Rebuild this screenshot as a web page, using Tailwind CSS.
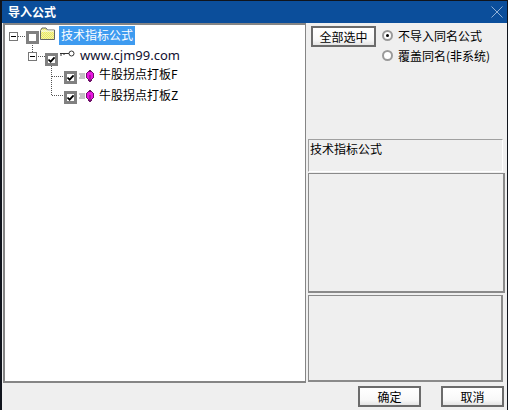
<!DOCTYPE html>
<html lang="zh">
<head>
<meta charset="UTF-8">
<title>导入公式</title>
<script src="https://cdn.jsdelivr.net/npm/@tailwindcss/browser@4"></script>
</head>
<body class="w-[508px] h-[410px] overflow-hidden bg-[#10141c] font-['Noto_Sans_CJK_SC','Noto_Sans',sans-serif] text-[12px] text-black">
<div class="ml-[2px] mt-px w-[505px] h-[409px] flex flex-col bg-[#efefef]">
  <!-- title bar -->
  <div class="h-[22px] shrink-0 bg-[#0b4e9b] flex items-center justify-between pl-[6px] pr-[3px]">
    <span class="text-white text-[12px] font-bold leading-none">导入公式</span>
    <svg width="12" height="12" viewBox="0 0 12 12" class="mr-[1px]"><path d="M0.5 0.5L11.5 11.5M11.5 0.5L0.5 11.5" stroke="#8fb0d6" stroke-width="1"/></svg>
  </div>

  <div class="flex h-[360px] pl-px">
    <!-- tree -->
    <div class="relative w-[303px] shrink-0 bg-white border-2 border-r border-[#858585] border-b-2">
      <svg class="absolute left-0 top-0" width="100" height="90" fill="none" stroke="#555" stroke-dasharray="1 1">
        <path d="M13 11.5H21M27.5 18V27M31 31.5H40M46.5 39V71M47 51.5H59M47 70.5H59"/>
      </svg>

      <div class="relative flex items-center h-[20px] mt-[1px] pl-[4px]">
        <svg width="9" height="9" viewBox="0 0 9 9"><rect x=".5" y=".5" width="8" height="8" fill="#fff" stroke="#777"/><path d="M2 4.5H7" stroke="#000"/></svg>
        <span class="ml-[8px] block shrink-0 w-[13px] h-[13px] border-[3px] border-[#808080] bg-white mt-[3px]"></span>
        <svg width="15" height="13" viewBox="0 0 15 13" class="ml-[1px] -mt-[5px]">
          <defs><pattern id="dither" width="2" height="2" patternUnits="userSpaceOnUse"><rect width="2" height="2" fill="#f6f24a"/><rect width="1" height="1" fill="#e8e8c0"/><rect x="1" y="1" width="1" height="1" fill="#e8e8c0"/></pattern></defs>
          <path d="M.5 3.5L2 1H6L7.5 3H14.5V12.5H.5Z" fill="url(#dither)" stroke="#666"/><path d="M1 4H14" stroke="#fff"/>
        </svg>
        <span class="ml-[4px] bg-[#3e9bf0] text-white h-[19px] w-[76px] text-[12px] leading-[18px] pl-[2px] -mt-[2px] whitespace-nowrap">技术指标公式</span>
      </div>

      <div class="relative flex items-center h-[20px] pl-[23px]">
        <svg width="9" height="9" viewBox="0 0 9 9"><rect x=".5" y=".5" width="8" height="8" fill="#fff" stroke="#777"/><path d="M2 4.5H7" stroke="#000"/></svg>
        <span class="ml-[8px] flex shrink-0 items-center justify-center w-[13px] h-[13px] border-[3px] border-[#808080] bg-white mt-[6px]">
          <svg width="8" height="7" viewBox="0 0 8 7"><path d="M.5 3.5L3 6L7.5 1" fill="none" stroke="#000" stroke-width="2"/></svg>
        </span>
        <svg width="15" height="7" viewBox="0 0 15 7" class="ml-[2px] -mt-[5px]" fill="none" stroke="#333"><circle cx="11.5" cy="3.5" r="2.5"/><path d="M0 3.5H9M1 3.5V6M4 3.5V5"/></svg>
        <span class="ml-[5px] font-['Noto_Sans',sans-serif] text-[13px] leading-none text-[#101030] whitespace-nowrap -mt-[2px]">www.cjm99.com</span>
      </div>

      <div class="relative flex items-center h-[20px] mt-px pl-[59px]">
        <span class="flex shrink-0 items-center justify-center w-[13px] h-[13px] border-[3px] border-[#808080] bg-white mt-px">
          <svg width="8" height="7" viewBox="0 0 8 7"><path d="M.5 3.5L3 6L7.5 1" fill="none" stroke="#000" stroke-width="2"/></svg>
        </span>
        <svg width="15" height="12" viewBox="0 0 15 12" class="ml-[2px] -mt-[3px]"><path d="M0 4H6M1 6H6M0 8H6" stroke="#888"/><path d="M11 .5L14.5 3.5V7.5L11 11.5L7.5 7.5V3.5Z" fill="#e815e0" stroke="#70106a" stroke-linejoin="bevel" shape-rendering="crispEdges"/><path d="M11 5V11" stroke="#70106a"/></svg>
        <span class="ml-[5px] text-[12px] leading-none whitespace-nowrap -mt-[6px]">牛股拐点打板F</span>
      </div>

      <div class="relative flex items-center h-[20px] pl-[59px]">
        <span class="flex shrink-0 items-center justify-center w-[13px] h-[13px] border-[3px] border-[#808080] bg-white mt-px">
          <svg width="8" height="7" viewBox="0 0 8 7"><path d="M.5 3.5L3 6L7.5 1" fill="none" stroke="#000" stroke-width="2"/></svg>
        </span>
        <svg width="15" height="12" viewBox="0 0 15 12" class="ml-[2px] -mt-[3px]"><path d="M0 4H6M1 6H6M0 8H6" stroke="#888"/><path d="M11 .5L14.5 3.5V7.5L11 11.5L7.5 7.5V3.5Z" fill="#e815e0" stroke="#70106a" stroke-linejoin="bevel" shape-rendering="crispEdges"/><path d="M11 5V11" stroke="#70106a"/></svg>
        <span class="ml-[5px] text-[12px] leading-none whitespace-nowrap -mt-[4px]">牛股拐点打板Z</span>
      </div>
    </div>

    <!-- right column -->
    <div class="flex-1 pl-[2px] flex flex-col">
      <div class="h-[116px] flex items-start pl-[3px] pt-[3px]">
        <button class="w-[65px] h-[21px] border-2 border-[#6b6b6b] bg-[linear-gradient(#fff_0%,#f8f8f8_70%,#e4e4e4_100%)] text-[12px] leading-none">全部选中</button>
        <div class="ml-[6px] flex flex-col gap-[7px] pt-[3px]">
          <label class="flex items-center h-[13px]">
            <span class="w-[11px] h-[11px] rounded-full border-2 border-[#9a9a9a] bg-white flex items-center justify-center"><span class="w-[3px] h-[3px] rounded-full bg-black"></span></span>
            <span class="ml-[5px] text-[12px] leading-none whitespace-nowrap">不导入同名公式</span>
          </label>
          <label class="flex items-center h-[13px]">
            <span class="w-[11px] h-[11px] rounded-full border-2 border-[#9a9a9a] bg-white"></span>
            <span class="ml-[5px] text-[12px] leading-none whitespace-nowrap">覆盖同名(非系统)</span>
          </label>
        </div>
      </div>
      <div class="w-[195px] h-[33px] border border-[#a0a0a0] border-b-white border-r-white text-[12px] leading-none pt-[3px] pl-px">技术指标公式</div>
      <div class="mt-[1px] w-[197px] h-[120px] border border-[#8a8a8a] border-b-2 border-r-2"></div>
      <div class="mt-[2px] w-[195px] h-[87px] border border-[#8a8a8a] border-b-2 border-r-2"></div>
    </div>
  </div>

  <!-- footer buttons -->
  <div class="flex justify-end gap-[20px] pt-[3px] pr-[3px]">
    <button class="w-[63px] h-[21px] border-2 border-[#6b6b6b] bg-[linear-gradient(#fff_0%,#f8f8f8_70%,#e4e4e4_100%)] text-[12px] leading-none">确定</button>
    <button class="w-[63px] h-[21px] border-2 border-[#6b6b6b] bg-[linear-gradient(#fff_0%,#f8f8f8_70%,#e4e4e4_100%)] text-[12px] leading-none">取消</button>
  </div>
</div>
</body>
</html>
